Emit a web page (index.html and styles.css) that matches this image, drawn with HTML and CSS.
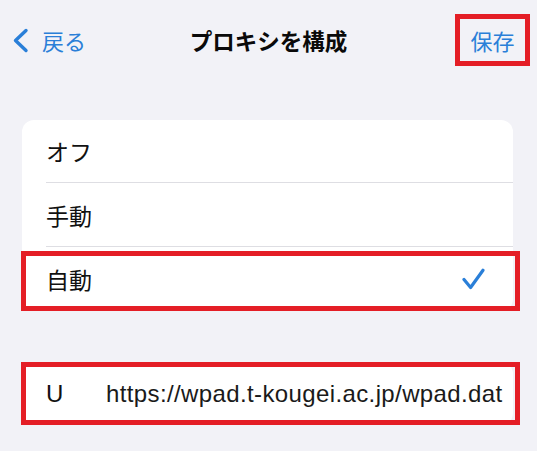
FILE: index.html
```html
<!DOCTYPE html>
<html lang="ja">
<head>
<meta charset="utf-8">
<title>プロキシを構成</title>
<link rel="stylesheet" href="styles.css">
</head>
<body>
<div class="screen">
  <header class="nav">
    <a class="nav-back">
      <svg class="chevron" width="17" height="25" viewBox="0 0 17 25"><path d="M14 2.5 L3.5 12.5 L14 22.5" fill="none" stroke="currentColor" stroke-width="3.4" stroke-linecap="round" stroke-linejoin="round"/></svg>
      <span>戻る</span>
    </a>
    <h1 class="nav-title">プロキシを構成</h1>
    <a class="nav-save"><span>保存</span></a>
  </header>

  <section class="group group-mode">
    <div class="row"><div class="row-inner">オフ</div></div>
    <div class="row"><div class="row-inner">手動</div></div>
    <div class="row row-last marked">
      <div class="row-inner">
        <span>自動</span>
        <svg class="check" width="23" height="22" viewBox="0 0 23 22"><path d="M2 11.5 L8.6 19.5 L21 2.2" fill="none" stroke="currentColor" stroke-width="3.2" stroke-linecap="round" stroke-linejoin="round"/></svg>
      </div>
    </div>
  </section>

  <section class="group group-url">
    <div class="row row-last marked">
      <div class="row-inner">
        <span class="url-label">U</span>
        <span class="url-value">https://wpad.t-kougei.ac.jp/wpad.dat</span>
      </div>
    </div>
  </section>
</div>
</body>
</html>
```

FILE: styles.css
```css
html, body {
  margin: 0;
  padding: 0;
  background: #f2f2f7;
}

body {
  font-family: "Liberation Sans", "Noto Sans CJK JP", sans-serif;
  color: #111;
  width: 537px;
  height: 451px;
  overflow: hidden;
}

.screen {
  padding-top: 14px;
}

.nav {
  display: grid;
  grid-template-columns: 1fr auto 1fr;
  align-items: center;
  height: 52px;
}

.nav-back {
  justify-self: start;
  display: flex;
  align-items: center;
  gap: 13px;
  padding-left: 12px;
  color: #2a7fd8;
  font-family: "Noto Sans CJK JP", sans-serif;
  font-size: 22px;
}

.chevron {
  display: block;
}

.nav-title {
  margin: 0;
  font-family: "Noto Sans CJK JP", sans-serif;
  font-size: 22.5px;
  font-weight: 700;
  color: #0a0a0a;
}

.nav-save {
  justify-self: end;
  margin-right: 7px;
  box-sizing: border-box;
  width: 75px;
  height: 52px;
  border: 5px solid #e41e26;
  display: flex;
  align-items: center;
  justify-content: center;
  color: #2a7fd8;
  font-family: "Noto Sans CJK JP", sans-serif;
  font-size: 22px;
}

.group {
  background: #ffffff;
  border-radius: 12px;
  margin: 0 24px 0 22px;
}

.group-mode {
  margin-top: 54px;
}

.group-url {
  margin-top: 51px;
}

.row {
  position: relative;
  height: 64px;
  padding-left: 24px;
  font-family: "Noto Sans CJK JP", sans-serif;
  font-size: 23px;
}

.row:first-child {
  height: 63px;
}

.row-inner {
  height: 100%;
  box-sizing: border-box;
  display: flex;
  align-items: center;
  justify-content: space-between;
  padding-right: 28px;
  border-bottom: 1px solid #dedee3;
}

.row-last .row-inner {
  border-bottom: none;
}

.marked::after {
  content: "";
  position: absolute;
  top: 4px;
  bottom: 0;
  left: -1px;
  right: -7px;
  border: 5px solid #e41e26;
  pointer-events: none;
}

.group-url .marked::after {
  top: 0;
}

.check {
  color: #2a7fd8;
  display: block;
}

.group-url .row-inner {
  justify-content: flex-start;
  padding-right: 0;
  white-space: nowrap;
}

.url-label {
  font-family: "Liberation Sans", sans-serif;
  font-size: 24px;
  width: 60px;
  flex: none;
}

.url-value {
  font-family: "Liberation Sans", sans-serif;
  font-size: 24px;
  letter-spacing: 0.38px;
  color: #1a1a1a;
}
```
